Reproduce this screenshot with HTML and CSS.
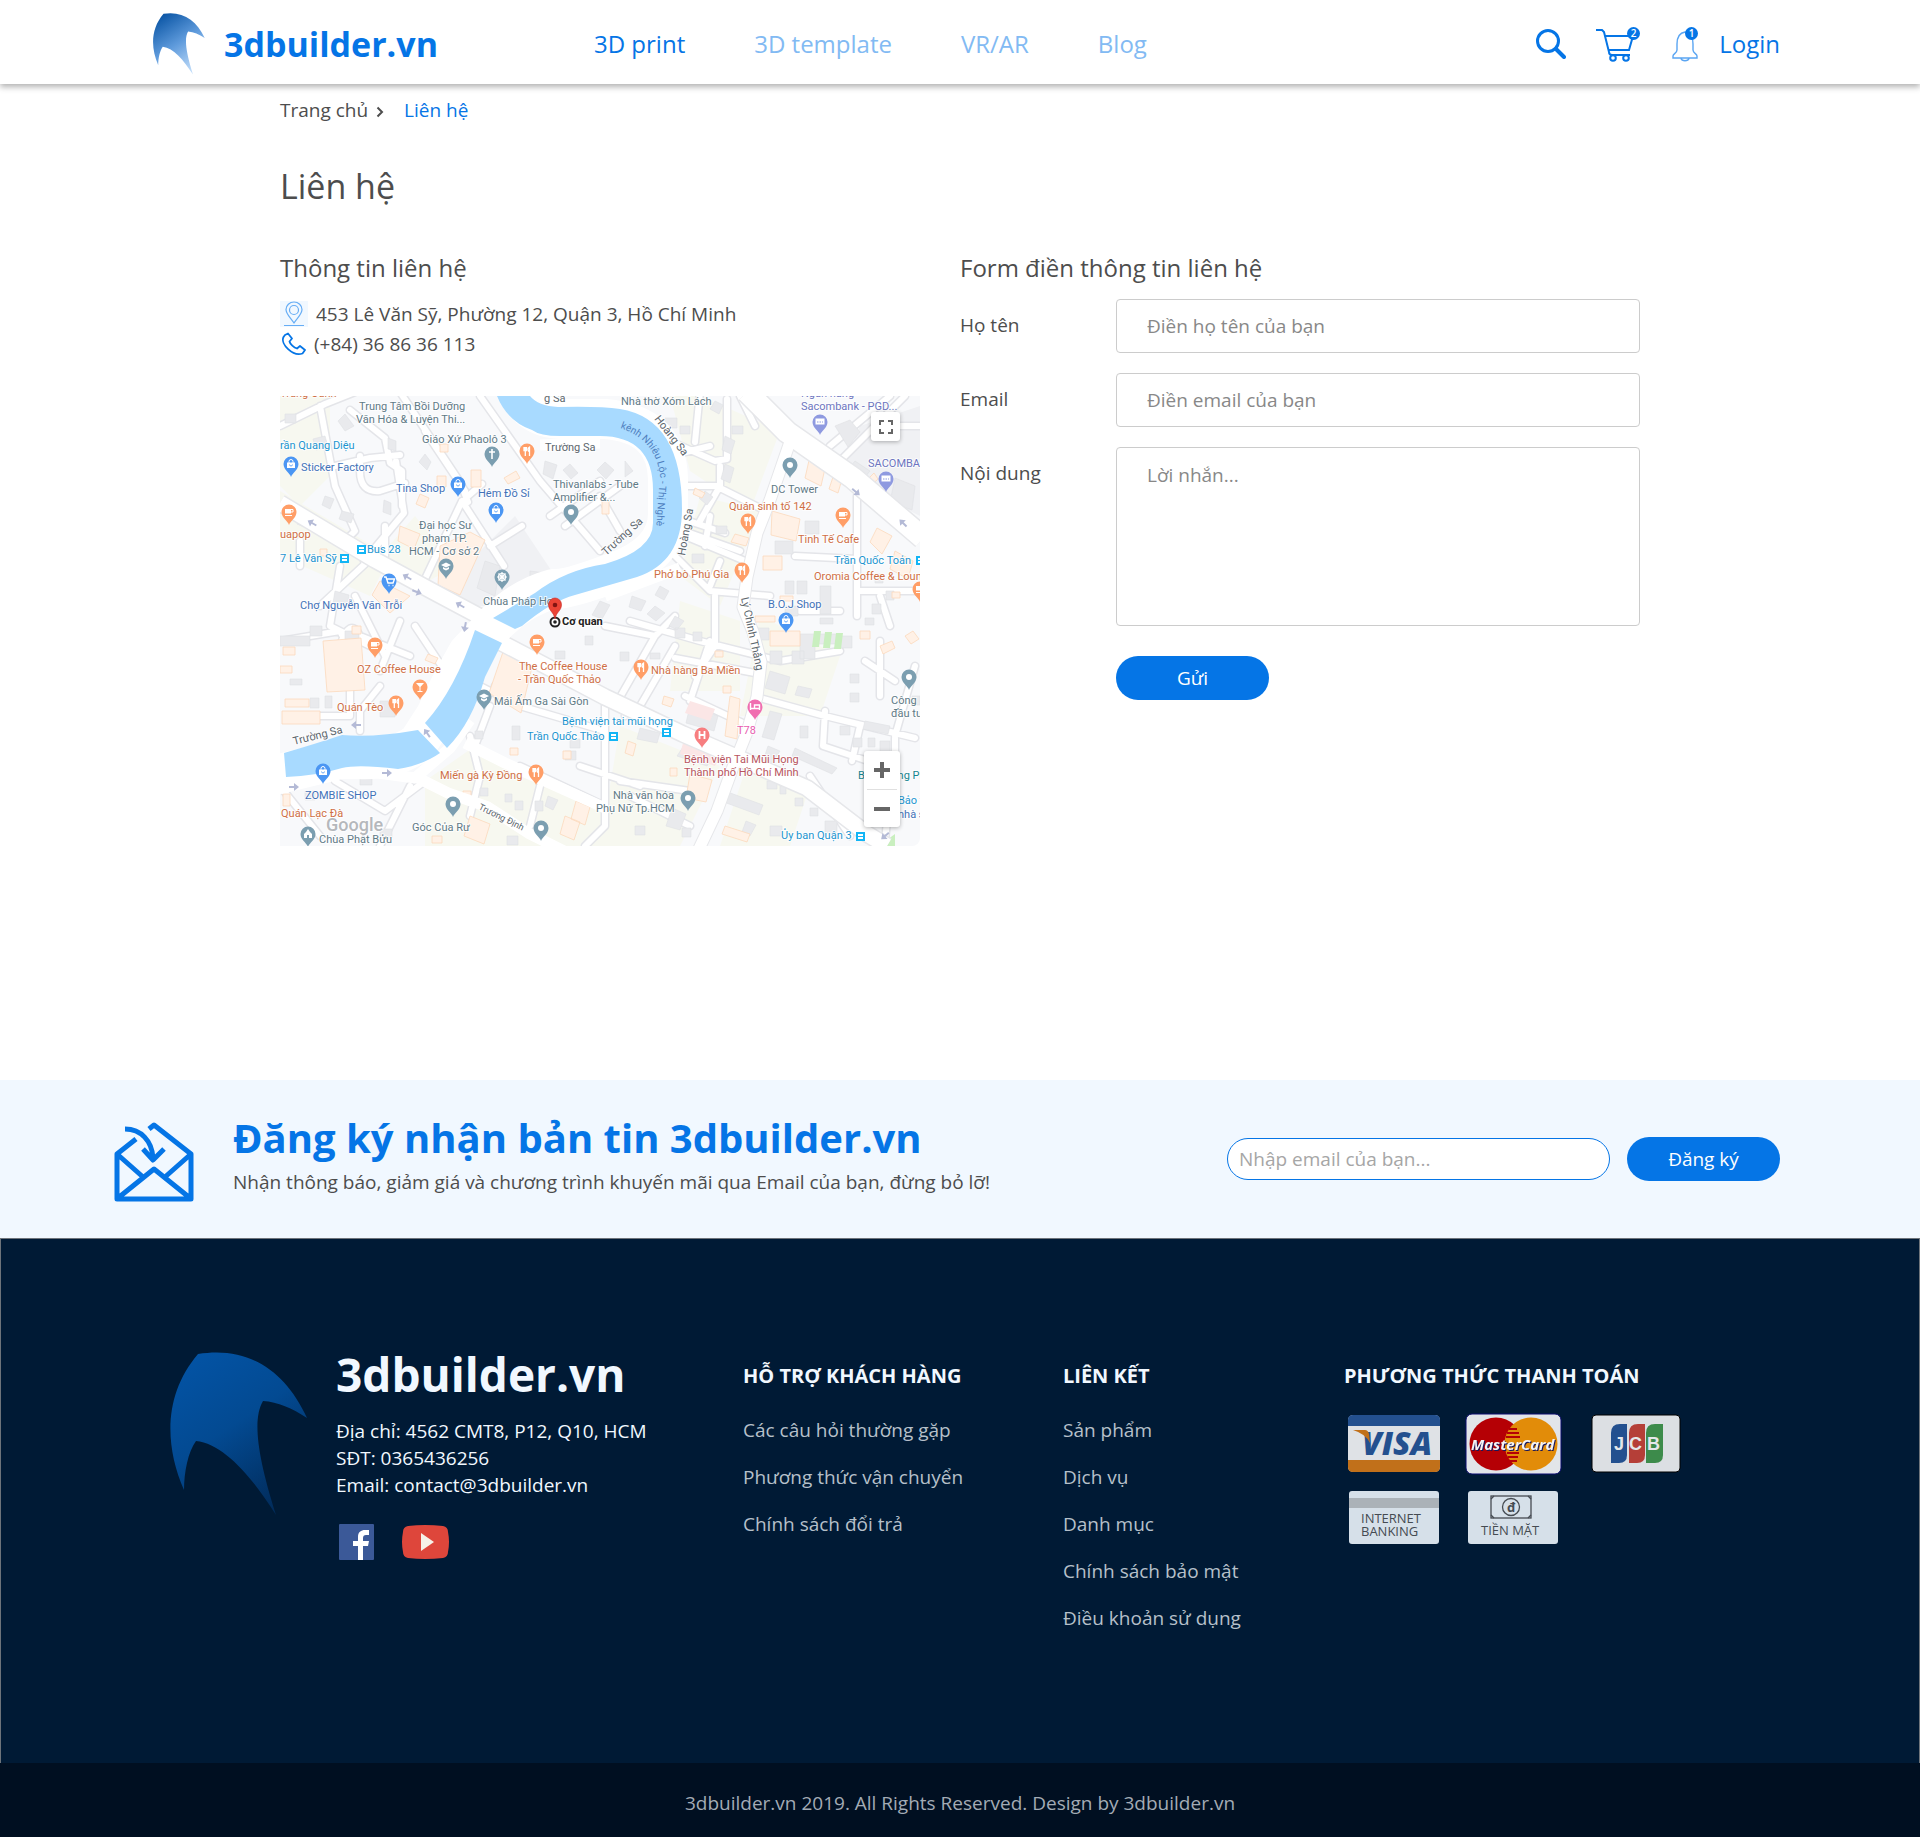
FILE: index.html
```html
<!DOCTYPE html>
<html lang="vi">
<head>
<meta charset="utf-8">
<meta name="viewport" content="width=device-width, initial-scale=1">
<title>Liên hệ - 3dbuilder.vn</title>
<link rel="stylesheet" href="styles.css">
</head>
<body>
<header class="site-header">
  <a class="brand" href="#">
    <svg class="brand-mark" viewBox="0 0 138 164" aria-hidden="true">
      <defs>
        <linearGradient id="markLight" x1="0.2" y1="0" x2="0.75" y2="1">
          <stop offset="0" stop-color="#0a55a5"/><stop offset="0.5" stop-color="#5f9bdc"/><stop offset="1" stop-color="#c9e2fc"/>
        </linearGradient>
        <linearGradient id="markDark" x1="0.2" y1="0" x2="0.75" y2="1">
          <stop offset="0" stop-color="#0353a4"/><stop offset="0.45" stop-color="#034a92"/><stop offset="1" stop-color="#012a58"/>
        </linearGradient>
      </defs>
      <path fill="url(#markLight)" d="M28 2C78-6 115 18 137 66C122 56 108 50 93 49C83 66 86 100 106 163C82 125 54 92 26 89C18 100 14 120 14 138C-6 92-6 42 28 2Z"/>
    </svg>
    <span class="brand-name">3dbuilder.vn</span>
  </a>
  <nav class="main-nav" aria-label="Menu">
    <a class="active" href="#">3D print</a>
    <a href="#">3D template</a>
    <a href="#">VR/AR</a>
    <a href="#">Blog</a>
  </nav>
  <div class="tools">
    <button class="tool" type="button" aria-label="Search">
      <svg class="icon-search" viewBox="0 0 30 30" fill="none" stroke="#0575e6"><circle cx="12" cy="12" r="10.5" stroke-width="3"/><path d="M20 20l8 8" stroke-width="4" stroke-linecap="round"/></svg>
    </button>
    <button class="tool" type="button" aria-label="Cart">
      <svg class="icon-cart" viewBox="0 0 44 35" fill="none" stroke="#0575e6" stroke-width="2"><path d="M0 3h6l2 2 5 20q0 3 3 3h18M9 9h28l-4 14H13"/><circle cx="17" cy="31" r="2.800"/><circle cx="30" cy="31" r="2.800"/></svg>
      <span class="badge">2</span>
    </button>
    <button class="tool" type="button" aria-label="Notifications">
      <svg class="icon-bell" viewBox="0 0 26 35" fill="none" stroke="#5aa5f2" stroke-width="1.400"><path d="M13 5C7 6 5 11 5 17v6c0 3-4 4-4 6v2h24v-2c0-2-4-3-4-6v-6C21 11 19 6 13 5zM9 31.500c1 3 7 3 8 0"/></svg>
      <span class="badge">1</span>
    </button>
    <a class="login" href="#">Login</a>
  </div>
</header>

<main class="page">
  <nav class="breadcrumb" aria-label="Breadcrumb">
    <a href="#">Trang chủ</a>
    <svg viewBox="0 0 8 12" aria-hidden="true"><path d="M1.500 1.500L6 6l-4.500 4.500" fill="none" stroke="#4d4d4d" stroke-width="2"/></svg>
    <a class="current" href="#">Liên hệ</a>
  </nav>
  <h1>Liên hệ</h1>
  <div class="columns">
    <section>
      <h2>Thông tin liên hệ</h2>
      <ul class="contact-list">
        <li>
          <svg class="icon-place" viewBox="0 0 28 26" fill="none" stroke="#66adf5" stroke-width="1.200"><path fill="#f1f8ff" stroke="none" d="M0 0h28v26H0z"/><path d="M14 22C10 16 6 13 6 8.500a8 7.500 0 0 1 16 0C22 13 18 16 14 22zM4 24.500h20"/><circle cx="14" cy="9" r="4.500"/></svg>
          <span>453 Lê Văn Sỹ, Phường 12, Quận 3, Hồ Chí Minh</span>
        </li>
        <li>
          <svg class="icon-phone" viewBox="0 0 28 24" fill="none" stroke="#0575e6" stroke-width="1.800" stroke-linejoin="round"><path d="M5 3L8 1.500 12 6.500 9.500 9.500C10 12 14 15.500 17 16.500L20 14 25 18 22.500 21.500C13 25 0 12 3.500 5z"/></svg>
          <span>(+84) 36 86 36 113</span>
        </li>
      </ul>
      <div class="map">
        <svg class="map-canvas" viewBox="0 0 640 450" role="img" aria-label="453 Lê Văn Sỹ, Phường 12, Quận 3">
          <defs>
            <path id="pin" d="M0 0C-1-4-7.500-7-7.500-13a7.500 7.500 0 0 1 15 0C7.500-7 1-4 0 0z"/>
            <g id="dot"><use href="#pin"/><circle cy="-13" r="3" fill="#fff"/></g>
            <g id="bag"><use href="#pin"/><path d="M-4-14.500h8v5.500h-8z" fill="#fff"/><path d="M-2-14v-1.500a2 2 0 0 1 4 0V-14" fill="none" stroke="#fff"/><path d="M-1.500-12.500a1.500 1.500 0 0 0 3 0" fill="none" stroke="#4b96f3" stroke-width=".8"/></g>
            <g id="cup"><use href="#pin"/><path d="M-4-16h6v4.500h-6zM-4-10h7v1h-7z" fill="#fff"/><path d="M2-15.500h2v2.500h-2" fill="none" stroke="#fff"/></g>
            <g id="fork"><use href="#pin"/><path d="M-3-17v3.500h2.500V-17M-1.700-17v9M2.500-8v-9c-2 1-2 4 0 5" fill="none" stroke="#fff" stroke-width="1.300"/></g>
            <g id="grad"><use href="#pin"/><path d="M-5-14l5-2.500 5 2.500-5 2.500zM-3-12l3 1.500 3-1.500v2l-3 1.500-3-1.500z" fill="#fff"/></g>
            <g id="bank"><use href="#pin"/><path d="M-4.500-16.500h9v6h-9z" fill="#fff"/><path d="M-3-13h6" stroke="#8f9ae0" stroke-dasharray="1.500 1"/></g>
            <g id="bus"><path d="M0 0h9v9H0z" fill="#12b5f5"/><path d="M2 2h5v5H2z" fill="#fff"/><path d="M2 4.500h5" stroke="#12b5f5"/></g>
            <path id="arrow" d="M-5-1h5v-3l5 4-5 4v-3h-5z" fill="#b4bad6"/>
          </defs>
          <path fill="#f8f9fb" d="M0 0h640v450H0z"/>
          <path fill="#f7f8f0" d="M0 95l110 65-20 40-90-40zM0 0h50v80L20 110 0 90zM410 75l60 40 30-80-80-35h-30zM420 100l60 15-40 95-40-30zM135 120l40 50-35 20-40-30zM145 385l50-35 130 60v40H145zM480 220l80 40-20 60-80 0zM340 330l100 40-40 80h-80zM470 360l60 30-20 60h-70zM400 205l60 20v70h-70z"/>
          <path fill="#f0f1f4" d="M175 180l60-60 40 60-30 30-80 0zM560 80l80 40V10l-60 20z"/>
          <g fill="none" stroke="#e4e5e9" stroke-width="9" stroke-linejoin="round" stroke-linecap="round">
            <path id="lanes" d="M0 30L45 8 75-4M40 10l15 80 20 45-12 12M70 14l35 28 5 25 12 8v35M80 60v15q0 22 20 20l25-8M55 70l35-8 30-3M120-4l60 90 8 20M145 35l40 60M200 0l60 85 60 70M182 105l-38 80M182 105l42 65M188 100l14-12M210 150l32-20M116 65l8 52-40 48M20 145v25M85 168L40 210M75 200l30 60M105 130v30M390 45l45 20 12-2 0-60M395 90h45l-20 35M440 70v22l40 20M400 122l45 15M390 130l70 25M405 140l60 25M430 120l-5 30M390 155l40 40 60 5M440 165l-10 25M435 200v50l-20 30M350 225l70 20 80 20 60-10M325 230l50 10 20-20M375 240l-40 70M395 250l-35 60-15 10M430 245l-20 60M395 262l80 15M405 300l60 28M480 302l65 18 90 22M545 315l-2 35 45 15q20 5 22 30l-5 50M580 330l-8 35M615 342v40M600 245v55M635 270l-20 70M585 265l30 20M515 160l62 3M577 100v60l0 60M520 215l40 0M577 195h63M600 200l10 30M610 0l-60 50M625 0l-70 70M640 30l-25 0M475 30l-15-30M60 170l-10 60 40 20M135 230l40 60M60 250q10-30 20-10l50 20M100 290l-20 25v20M120 225l-20 50M0 245l60-10 10 20v65H20M0 390l40 50M55 385l50 30 40-30M130 390l-30 60M190 340l10 40-10 40M240 370l85 40M200 290l40 20 85 25M210 310l-15 40M325 300l0 130-20 20M300 370l60 20M340 385l70 10M350 400l60 30M250 430l10-40M570 440l-40-60M215 290l30-30 30 10M420-4l-5 50M390 60l40-10M285 130l55-40M270 120l50-35M320 100l20 35"/>
          </g>
          <use href="#lanes" class="lane-fill"/>
          <g fill="#e9eaed" stroke="#dfe0e4" stroke-width=".6">
            <path d="M5 18h11v9H5zM33 43l12-3 3 11-12 3zM65 18l9 12-9 5-7-10zM20 120l10 3-3 9-10-4zM45 100l9 3-4 10-8-4zM62 115l12 3-3 9-12-4zM104 104l7 3v12l-8-3zM145 58l6 8-4 8-8-8zM108 42l8 3v10l-8-2zM225 195l14 6-4 12-14-6zM205 165l15 5-5 30-18-8zM195 210l10 4-4 9-10-5zM55 195l14 4-2 12-14-4zM30 230h12v10H30zM0 240h30v10H0zM65 235h14v10H65zM250 175l15 2v10h-15zM265 65l12 4-4 14-10-5zM290 68l8 9-7 6-8-9zM325 66l9 8-8 9-9-9zM345 65l8 10-8 6zM385 22h12v10h-12zM400 30h10v8h-10zM445 40l10 5-4 13-9-4zM445 68l9 4-4 15-9-4zM452 30h11v8h-11zM435 5l8 4-4 9-9-5zM425 95l8 6-6 8-8-7zM555 30l15-6 10 12-12 15zM575 65l15 10-10 12-15-10zM615 82l20 8-3 24-22-8zM525 125h14v13h-14zM495 145h18v13h-18zM505 185h9v13h-9zM517 185h10v13h-10zM540 190h11v28h-11zM505 210h13v10h-13zM540 222h13v6h-13zM595 178h8v9h-8zM606 195h8v9h-8zM592 208h9v10h-9zM585 222h9v7h-9zM412 158h12v9h-12zM436 130h11v8h-11zM352 200l14 5-5 10-12-4zM375 210l10 7-9 8-9-7zM395 220l9 5-7 9-8-4zM320 205l10 4-8 14-10-4zM380 190l9 5-5 9-9-5zM395 232h10v10h-10zM413 236h9v9h-9zM340 256h9v9h-9zM370 257h10v6h-10zM475 232h14v12h-14zM490 255h12v13h-12zM512 255h12v13h-12zM520 238h40v10h-25v15h-15zM490 275l20 6-5 17-20-6zM518 290l14 3-3 9-14-3zM560 240h12v12h-12zM570 278h9v9h-9zM570 297h9v9h-9zM585 325l25 5-2 8-25-5zM520 330h8v12h-8zM410 310l28 10-4 15-28-8zM360 332l20 5-3 10-20-4zM405 348l30 10-8 12-30-10zM490 315l12 3-8 26-12-3zM488 350l12 5-8 12-8-5zM515 352l42 20-5 6-40-18zM560 330h10v9h-10zM573 342h9v9h-9zM588 342h7v9h-7zM445 395l38 14-4 10-38-14zM487 385h10v8h-10zM500 390h6v8h-6zM515 402h8v8h-8zM530 412h8v8h-8zM490 430h12v10h-12zM466 425l10 4-6 11-8-4zM392 412l14 6-6 16-14-4zM402 432h9v9h-9zM355 430h10v9h-10zM545 425h12v12h-12zM10 283h12v6H10zM30 302h9v10h-9zM45 300h7v12h-7zM72 258h10v10H72zM73 280h7v9h-7zM100 305h15v16h-15zM195 335h8v8h-8zM232 330h8v14h-8zM290 343h10v9h-10zM285 355h11v9h-11zM235 405h8v9h-8zM225 398h7v8h-7zM255 405h8v10h-8zM268 400l10 4-5 10-8-4zM80 382h12v7H80zM100 433h12v9h-12zM25 395h10v9H25zM227 440h11v9h-11zM305 240h8v9h-8zM275 255h10v8h-10zM200 392h8v8h-8zM600 345h10v12h-10zM632 300h8v9h-8z"/>
          </g>
          <g fill="#fff1e6" stroke="#fbd9bd" stroke-width=".8">
            <path d="M43 245l38-3 4 52-38 2zM3 251h12v8H3zM0 270h12v7H0zM5 303h24v8H5zM2 315h38v13H2zM160 150l30-14 15 8-25 55-22-10zM100 185l30 15-20 17-18-18zM120 130l20 8-6 15-16-8zM191 74h10v17h-10zM224 82l12-7 4 7-12 6zM140 98l9 4-4 10-9-4zM157 80h9v11h-9zM160 48h8v8h-8zM225 250l28 17-12 50-32-20zM530 60l16 8-5 22-16-8zM492 115l28 8-4 22-25-6zM483 160h19v14h-19zM490 235h30v15h-30zM415 92l10 5-3 5-9-4zM455 138l14 4-3 8-15-4zM554 78l8 5-4 14-9-4zM597 132l15 8-10 18-12-12zM585 86l9-9 4 6-10 9zM615 155l18 10-5 18-18-10zM580 235h10v8h-10zM625 240l8-5 6 8-8 5zM600 250l12-5 3 7-12 6zM450 300l10 3-3 40-12-3zM348 345l8 3-3 12-8-3zM410 378l22 6-6 22-20-4zM390 372h7v8h-7zM443 290h8v7h-8zM384 300l10 3-3 8-9-3zM435 255h8v6h-8zM190 420l20 8-6 20-20-8zM152 440h10v7h-10zM230 352h8v7h-8zM283 355h8v8h-8zM296 405l14 6-5 18-14-6zM285 420l15 6-6 18-14-6zM445 430l25 8-3 8-25-8zM40 153h7v7h-7zM72 230h9v8h-9zM3 398h7v12H3zM183 395h8v5h-8zM500 200h13v5h-13zM475 220h20v6h-20zM612 196h8v6h-8zM322 105h7v13h-7zM148 258l10 4-3 6-10-4z" />
          </g>
          <path fill="#c9efbf" d="M534 235h7l-2 16h-7zM545 236h7l-2 16h-7zM556 237h7l-2 16h-7zM604 446l11-8v12h-9z"/>
          <path fill="#fbe6e6" d="M405 340l40 10-10 20-35-12zM410 305l25 8-5 12-25-8z"/>
          <g fill="none" stroke="#e6e7ea" stroke-linejoin="round">
            <path stroke-width="18" d="M0 107L95 164l57 31 60 32M222 247l103 54 78 37 60 26 64 28 60 46 20 12"/>
            <path stroke-width="24" d="M467-4l40 40 66 46 70 60"/>
            <path stroke-width="13" d="M512 40l-22 64-13 33-10 44-4 30 10 25 8 30-4 35-10 35-14 35-16 44-20 42"/>
          </g>
          <g fill="none" stroke="#fff" stroke-linejoin="round">
            <path stroke-width="40" d="M235-8q15 30 45 31h45q62 5 63 60v35q0 38-50 57t-65 18q-30 8-55 32l-30 32q-20 35-32 62l-18 28q-25 18-60 16H60l-65 16"/>
            <path stroke-width="15" d="M0 107L95 164l57 31 60 32M222 247l103 54 78 37 60 26 64 28 60 46 20 12"/>
            <path stroke-width="21" d="M467-4l40 40 66 46 70 60"/>
            <path stroke-width="11" d="M512 40l-22 64-13 33-10 44-4 30 10 25 8 30-4 35-10 35-14 35-16 44-20 42M-5 388l80-14 60 8 35-30 20-28M325 200l75-28M320 47l-60 2M138 382l30 15 40 14 40 26 40 20M185 347l40 20 100 45"/>
          </g>
          <g fill="#a8daff">
            <path d="M217 0q10 25 35 34 8 6 28 6h40q53 0 53 54v33q0 27-48 41-40 6-70 29l-42 25 22 11 7-3q30-25 53-31l62-18q45-15 45-68 0-90-62-100-20-3-62-2-20-1-28-11z"/>
            <path d="M195 234q-20 60-50 93l22 25q25-25 38-71l17-34zM138 334q-45 8-76 5-24 8-58 18l2 24q30-1 56-9 16-4 56 1 25-4 42-16z"/>
          </g>
          <g>
            <use href="#arrow" transform="translate(32 127) rotate(210)"/><use href="#arrow" transform="translate(127 181) rotate(210)"/>
            <use href="#arrow" transform="translate(137 196) rotate(20)"/><use href="#arrow" transform="translate(180 209) rotate(210)"/>
            <use href="#arrow" transform="translate(185 231) rotate(100)"/><use href="#arrow" transform="translate(76 329) rotate(180)"/>
            <use href="#arrow" transform="translate(147 337) rotate(235)"/><use href="#arrow" transform="translate(107 377)"/>
            <use href="#arrow" transform="translate(14 391)"/><use href="#arrow" transform="translate(576 96) rotate(40)"/><use href="#arrow" transform="translate(623 127) rotate(225)"/>
            <use href="#arrow" transform="translate(605 440) rotate(140)"/>
          </g>
          <g class="labels">
            <g class="grey">
              <text x="79" y="14">Trung Tâm Bồi Dưỡng</text><text x="76" y="27">Văn Hóa &amp; Luyện Thi...</text>
              <text x="142" y="47">Giáo Xứ Phaolô 3</text><text x="273" y="92">Thivanlabs - Tube</text><text x="273" y="105">Amplifier &amp;...</text>
              <text x="139" y="133">Đại học Sư</text><text x="142" y="146">phạm TP.</text><text x="129" y="159">HCM - Cơ sở 2</text>
              <text x="203" y="209">Chùa Pháp Hoa</text><text x="341" y="9">Nhà thờ Xóm Lách</text><text x="491" y="97">DC Tower</text>
              <text x="214" y="309">Mái Ấm Ga Sài Gòn</text><text x="132" y="435">Góc Của Rư</text><text x="39" y="447">Chùa Phật Bửu</text>
              <text x="333" y="403">Nhà văn hóa</text><text x="316" y="416">Phụ Nữ Tp.HCM</text><text x="611" y="308">Công</text><text x="611" y="321">đầu tư</text>
            </g>
            <g class="street">
              <text x="265" y="55">Trường Sa</text><text x="264" y="6">g Sa</text>
              <text transform="translate(374 23) rotate(52)">Hoàng Sa</text><text transform="translate(405 160) rotate(-80)">Hoàng Sa</text>
              <text transform="translate(326 160) rotate(-42)">Trường Sa</text><text transform="translate(14 349) rotate(-14)">Trường Sa</text>
              <text transform="translate(461 202) rotate(78)">Lý Chính Thắng</text><text class="small" transform="translate(198 413) rotate(26)">Trương Định</text>
            </g>
            <path id="canal" d="M340 32Q376 44 380 80L376 134" fill="none"/>
            <text class="water"><textPath href="#canal">kênh Nhiêu Lộc - Thị Nghè</textPath></text>
            <g class="blue">
              <text x="21" y="75">Sticker Factory</text><text x="116" y="96">Tina Shop</text><text x="198" y="101">Hẻm Đồ Sỉ</text>
              <text x="20" y="213">Chợ Nguyễn Văn Trỗi</text><text x="488" y="212">B.O.J Shop</text><text x="25" y="403">ZOMBIE SHOP</text><text x="618" y="422">nhà sách</text>
            </g>
            <g class="transit">
              <text x="0" y="53">rần Quang Diệu</text><text x="87" y="157">Bus 28</text><text x="0" y="166">7 Lê Văn Sỹ</text>
              <text x="554" y="168">Trần Quốc Toản</text><text x="282" y="329">Bệnh viện tai mũi họng</text><text x="247" y="344">Trần Quốc Thảo</text>
              <text x="501" y="443">Ủy ban Quận 3</text><text x="618" y="408">Bảo tàng</text><text class="teal" x="578" y="383">Bệnh cộng Phú</text>
            </g>
            <g class="food">
              <text x="0" y="1">Trung Oanh</text><text x="0" y="142">uapop</text><text x="449" y="114">Quán sinh tố 142</text><text x="518" y="147">Tinh Tế Cafe</text>
              <text x="374" y="182">Phở bò Phú Gia</text><text x="534" y="184">Oromia Coffee &amp; Lounge</text><text x="77" y="277">OZ Coffee House</text>
              <text x="57" y="315">Quán Tèo</text><text x="239" y="274">The Coffee House</text><text x="238" y="287">- Trần Quốc Thảo</text>
              <text x="371" y="278">Nhà hàng Ba Miền</text><text x="160" y="383">Miến gà Kỳ Đồng</text><text x="1" y="421">Quán Lạc Đà</text>
            </g>
            <g class="violet"><text x="521" y="1">Ngân hàng</text><text x="521" y="14">Sacombank - PGD...</text><text x="588" y="71">SACOMBANK</text></g>
            <text class="pink" x="457" y="338">T78</text>
            <g class="medical"><text x="404" y="367">Bệnh viện Tai Mũi Họng</text><text x="404" y="380">Thành phố Hồ Chí Minh</text></g>
            <text class="google" x="46" y="435">Google</text>
          </g>
          <use href="#bus" x="77" y="149"/><use href="#bus" x="60" y="158"/><use href="#bus" x="636" y="160"/><use href="#bus" x="329" y="336"/><use href="#bus" x="382" y="332"/><use href="#bus" x="576" y="436"/>
          <g fill="#4b96f3"><use href="#bag" x="11" y="81"/><use href="#bag" x="178" y="101"/><use href="#bag" x="216" y="127"/><use href="#bag" x="506" y="237"/><use href="#bag" x="43" y="388"/><use href="#pin" x="109" y="198"/></g>
          <path d="M104 181h2l2 6h5l1.500-4h-8M108.500 189.500h1M112.500 189.500h1" fill="none" stroke="#fff" stroke-width="1.400"/>
          <g fill="#ff9e67"><use href="#cup" x="9" y="129"/><use href="#fork" x="247" y="68"/><use href="#fork" x="468" y="138"/><use href="#cup" x="563" y="132"/><use href="#fork" x="462" y="187"/><use href="#cup" x="640" y="206"/><use href="#cup" x="95" y="262"/><use href="#pin" x="140" y="304"/><use href="#fork" x="116" y="320"/><use href="#cup" x="257" y="259"/><use href="#fork" x="256" y="389"/><use href="#fork" x="361" y="284"/></g>
          <path d="M136 287h8l-4 4.500zM139.500 290h1v5h2v1h-5v-1h2z" fill="#fff"/>
          <g fill="#7b9eb0"><use href="#pin" x="212" y="71"/><use href="#dot" x="291" y="129"/><use href="#grad" x="166" y="183"/><use href="#pin" x="222" y="194"/><use href="#dot" x="510" y="82"/><use href="#grad" x="204" y="314"/><use href="#dot" x="173" y="421"/><use href="#dot" x="261" y="445"/><use href="#pin" x="28" y="451"/><use href="#dot" x="408" y="415"/><use href="#dot" x="629" y="294"/></g>
          <path d="M212 53v10M209 56h6" stroke="#fff" stroke-width="1.600"/>
          <g fill="none" stroke="#fff" stroke-width="1.200"><circle cx="222" cy="181" r="3.500"/><path d="M217 181h10M222 176v10M218.500 177.500l7 7M225.500 177.500l-7 7"/></g>
          <path d="M24 442v-4l2-2 2-3 2 3 2 2v4h-3v-3h-2v3z" fill="#fff"/>
          <g fill="#8f9ae0"><use href="#bank" x="540" y="39"/><use href="#bank" x="606" y="96"/></g>
          <use href="#pin" x="475" y="324" fill="#f06eb0"/><path d="M470.500 307v7M470.500 312.500h9V309h-5v3.500M479.500 314v-2" fill="none" stroke="#fff" stroke-width="1.400"/>
          <use href="#pin" x="422" y="352" fill="#f77e80"/><path d="M419.500 335v8M424.500 335v8M419.500 339h5" stroke="#fff" stroke-width="1.800"/>
          <circle cx="275" cy="226" r="4.500" fill="#fff" stroke="#222" stroke-width="2"/><circle cx="275" cy="226" r="1.800" fill="#222"/>
          <path d="M275 223c-1-7-6.500-8-6.500-14.500a6.500 6.500 0 0 1 13 0c0 6.500-5.500 7.500-6.500 14.500z" fill="#ea4335" stroke="#c5221f" stroke-width=".6"/><circle cx="275" cy="209" r="2.300" fill="#811411"/>
          <text class="here" x="282" y="229">Cơ quan</text>
        </svg>
        <button class="map-control fullscreen" type="button" aria-label="Fullscreen"><svg viewBox="0 0 14 14"><path d="M1 5V1h4M9 1h4v4M13 9v4H9M5 13H1V9" fill="none" stroke="#666" stroke-width="2"/></svg></button>
        <div class="map-control zoom">
          <button type="button" aria-label="Zoom in"><svg viewBox="0 0 18 18"><path d="M9 1v16M1 9h16" stroke="#666" stroke-width="4"/></svg></button>
          <button type="button" aria-label="Zoom out"><svg viewBox="0 0 18 18"><path d="M1 9h16" stroke="#666" stroke-width="4"/></svg></button>
        </div>
      </div>
    </section>
    <section>
      <h2>Form điền thông tin liên hệ</h2>
      <form class="contact-form">
        <label for="name">Họ tên</label>
        <input id="name" type="text" placeholder="Điền họ tên của bạn">
        <label for="email">Email</label>
        <input id="email" type="email" placeholder="Điền email của bạn">
        <label for="message">Nội dung</label>
        <textarea id="message" placeholder="Lời nhắn..."></textarea>
        <button class="pill" type="submit">Gửi</button>
      </form>
    </section>
  </div>
</main>

<section class="newsletter">
  <svg class="icon-mail" viewBox="0 0 80 80" fill="none" stroke="#0575e6" stroke-width="5" stroke-linejoin="round"><path d="M22 17L3 32v45h74V32L40 3l-5 4M3 32l26 23M77 32L51 55M4 76l36-29 36 29"/><path d="M11 7c16 0 27 12 28 29M29 27l10 11 11-11"/></svg>
  <div class="newsletter-text">
    <h2>Đăng ký nhận bản tin 3dbuilder.vn</h2>
    <p>Nhận thông báo, giảm giá và chương trình khuyến mãi qua Email của bạn, đừng bỏ lỡ!</p>
  </div>
  <form class="subscribe">
    <input type="email" aria-label="Email" placeholder="Nhập email của bạn...">
    <button class="pill" type="submit">Đăng ký</button>
  </form>
</section>

<footer class="site-footer">
  <div class="footer-main">
    <svg class="footer-mark" viewBox="0 0 138 164" aria-hidden="true"><path fill="url(#markDark)" d="M28 2C78-6 115 18 137 66C122 56 108 50 93 49C83 66 86 100 106 163C82 125 54 92 26 89C18 100 14 120 14 138C-6 92-6 42 28 2Z"/></svg>
    <div class="company">
      <p class="company-name">3dbuilder.vn</p>
      <address>Địa chỉ: 4562 CMT8, P12, Q10, HCM<br>SĐT: 0365436256<br>Email: contact@3dbuilder.vn</address>
      <div class="social">
        <a href="#" aria-label="Facebook"><svg class="icon-fb" viewBox="0 0 35 36"><rect width="35" height="36" rx="1" fill="#3b5998"/><path fill="#fff" d="M19 36V22h-5v-5h5v-4c0-5 3-7 7-7h4v5h-3c-2 0-3 1-3 3v3h6l-1 5h-5v14z"/></svg></a>
        <a href="#" aria-label="YouTube"><svg class="icon-yt" viewBox="0 0 47 34"><path fill="#de463b" d="M6 1q17-2 35 0 5 1 5 6 2 10 0 20 0 5-5 6-18 2-35 0-5-1-5-6-2-10 0-20 0-5 5-6z"/><path fill="#f6f1e8" d="M19 8l13 9-13 9z"/></svg></a>
      </div>
    </div>
    <section class="footer-col">
      <h3>HỖ TRỢ KHÁCH HÀNG</h3>
      <ul>
        <li><a href="#">Các câu hỏi thường gặp</a></li>
        <li><a href="#">Phương thức vận chuyển</a></li>
        <li><a href="#">Chính sách đổi trả</a></li>
      </ul>
    </section>
    <section class="footer-col">
      <h3>LIÊN KẾT</h3>
      <ul>
        <li><a href="#">Sản phẩm</a></li>
        <li><a href="#">Dịch vụ</a></li>
        <li><a href="#">Danh mục</a></li>
        <li><a href="#">Chính sách bảo mật</a></li>
        <li><a href="#">Điều khoản sử dụng</a></li>
      </ul>
    </section>
    <section class="footer-col">
      <h3>PHƯƠNG THỨC THANH TOÁN</h3>
      <div class="payments">
        <svg class="card" viewBox="0 0 98 62" role="img" aria-label="Visa">
          <rect x="3" y="2" width="92" height="57" rx="5" fill="#dfe2e6"/><path fill="#23508f" d="M3 13V7q0-5 5-5h82q5 0 5 5v6z"/><path fill="#c1701a" d="M3 47h92v7q0 5-5 5H8q-5 0-5-5z"/>
          <text class="visa" x="17" y="42">VISA</text><path fill="#c1701a" d="M8 17h12q3 0 4 4l1 9q-4-9-17-13z"/>
        </svg>
        <svg class="card" viewBox="0 0 98 62" role="img" aria-label="MasterCard">
          <rect x="2" y="1" width="95" height="60" rx="6" fill="#e2e5e9" stroke="#0b0b6e"/><circle cx="32" cy="31" r="26.500" fill="#b50005"/><circle cx="67" cy="31" r="26.500" fill="#e28c09"/>
          <path d="M45 16h8M43 20h12M42 24h14M43 40h12M44 44h10M46 48h7" stroke="#b50005" stroke-width="2"/><text class="mc" x="7" y="37">MasterCard</text>
        </svg>
        <svg class="card" viewBox="0 0 98 62" role="img" aria-label="JCB">
          <rect x="9" y="2" width="88" height="57" rx="4" fill="#dcdfe3" stroke="#000"/>
          <path fill="#23508f" d="M28 20q0-9 9-9h7v31q0 8-8 8h-8z"/><path fill="#b53f38" d="M46 20q0-9 9-9h7v31q0 8-8 8h-8z"/><path fill="#3d8b4b" d="M63 20q0-9 9-9h8v31q0 8-8 8h-9z"/>
          <text class="jcb" x="31 46 64" y="37">JCB</text>
        </svg>
        <svg class="card" viewBox="0 0 98 62" role="img" aria-label="Internet banking">
          <rect x="4" y="6" width="90" height="53" rx="3" fill="#d6e0e9"/><path fill="#abb2b8" d="M4 13h90v10H4z"/><text class="bank" x="16" y="38">INTERNET</text><text class="bank" x="16" y="51">BANKING</text>
        </svg>
        <svg class="card" viewBox="0 0 98 62" role="img" aria-label="Tiền mặt">
          <rect x="4" y="6" width="90" height="53" rx="3" fill="#d6e0e9"/><g fill="none" stroke="#454b52" stroke-width="1.300"><rect x="27" y="11" width="40" height="22"/><circle cx="47" cy="22" r="8.500"/><path d="M27 14l3-3M64 11l3 3M27 30l3 3M64 33l3-3"/></g>
          <text class="dong" x="43" y="27">đ</text><text class="bank" x="17" y="50">TIỀN MẶT</text>
        </svg>
      </div>
    </section>
  </div>
  <p class="copyright">3dbuilder.vn 2019. All Rights Reserved. Design by 3dbuilder.vn</p>
</footer>
</body>
</html>
```
FILE: styles.css
```css
* { box-sizing: border-box; }

body {
  margin: 0;
  font: 19px/28px "Open Sans", "Noto Sans", sans-serif;
  color: #4d4d4d;
  background: #fff;
}

a { color: inherit; text-decoration: none; }
button, input, textarea { font: inherit; }
button { padding: 0; border: 0; background: none; cursor: pointer; }
h1, h2, h3, p, ul { margin: 0; padding: 0; }
h1, h2 { font-weight: 400; }
ul { list-style: none; }
svg { display: block; flex: none; }

/* Header */
.site-header {
  position: relative;
  display: flex;
  align-items: center;
  min-height: 84px;
  padding: 0 140px 0 152px;
  color: #0575e6;
  font-size: 24px;
  line-height: 36px;
  box-shadow: 0 3px 6px rgba(0, 0, 0, .3);
}
.brand { display: flex; align-items: center; gap: 18px; width: 442px; }
.brand-mark { width: 54px; height: 62px; margin-top: 4px; }
.brand-name { font-size: 34px; font-weight: 700; line-height: 48px; padding-top: 4px; }
.main-nav { display: flex; gap: 69px; padding-top: 4px; }
.main-nav a { color: #82baf3; }
.main-nav .active { color: #0575e6; }
.tools { display: flex; align-items: center; margin-left: auto; padding-top: 4px; }
.tool { position: relative; }
.icon-search { width: 30px; height: 30px; margin-right: 30px; }
.icon-cart { width: 44px; height: 35px; margin-right: 32px; }
.icon-bell { width: 26px; height: 35px; margin-right: 21px; }
.badge {
  position: absolute;
  top: 0;
  right: 32px;
  width: 13px;
  height: 13px;
  border-radius: 50%;
  background: #0575e6;
  color: #fff;
  font-size: 10px;
  font-weight: 600;
  line-height: 13px;
  text-align: center;
}
.icon-bell + .badge { right: 21px; }

/* Contact page */
.page { max-width: 1360px; margin: 0 auto; padding: 12px 0 234px; }
.breadcrumb { display: flex; align-items: center; }
.breadcrumb svg { width: 8px; height: 12px; margin: 4px 20px 0 8px; }
.breadcrumb .current { color: #0575e6; }
h1 { margin-top: 38px; font-size: 34px; line-height: 48px; }
.columns { display: grid; grid-template-columns: 640fr 680fr; gap: 40px; margin-top: 42px; }
.columns h2 { margin-bottom: 15px; font-size: 24px; line-height: 32px; }
.contact-list li { display: flex; align-items: center; gap: 8px; min-height: 30px; }
.contact-list li:last-child { gap: 6px; }
.icon-place { width: 28px; height: 26px; }
.icon-phone { width: 28px; height: 24px; }

.contact-form { display: grid; grid-template-columns: 156px 1fr; row-gap: 20px; }
.contact-form label { padding-top: 12px; }
.contact-form input, .contact-form textarea {
  width: 100%;
  height: 54px;
  padding: 0 30px;
  border: 1px solid #ccc;
  border-radius: 4px;
  background: #fff;
  color: #4d4d4d;
}
.contact-form textarea { display: block; height: 179px; padding: 13px 30px; resize: none; }
.contact-form .pill { grid-column: 2; margin-top: 10px; }
::placeholder { color: #888; opacity: 1; }
.pill { width: 153px; height: 44px; border-radius: 22px; background: #0575e6; color: #fff; }

/* Map */
.map { position: relative; margin-top: 37px; }
.map-canvas { width: 100%; height: auto; border-radius: 0 0 8px 0; }
.map-control { position: absolute; right: 20px; border-radius: 3px; background: #fff; box-shadow: 0 1px 4px rgba(0, 0, 0, .3); }
.map-control svg { margin: auto; }
.fullscreen { top: 16px; width: 29px; height: 29px; }
.fullscreen svg { width: 14px; height: 14px; }
.zoom { bottom: 19px; width: 36px; }
.zoom button { display: block; width: 30px; height: 38px; margin: 0 auto; }
.zoom button + button { border-top: 1px solid #e0e0e0; }
.zoom svg { width: 18px; height: 18px; }
.lane-fill { fill: none; stroke: #fff; stroke-width: 6px; stroke-linejoin: round; stroke-linecap: round; }
.labels, .here { font-family: Roboto, "Noto Sans", sans-serif; font-size: 11px; }
.labels text { paint-order: stroke; stroke: rgba(255, 255, 255, .8); stroke-width: 2px; stroke-linejoin: round; }
.grey { fill: #5f7a86; }
.street { fill: #5c666d; }
.street .small { font-size: 9px; }
.labels .water { fill: #4f7fc0; font-size: 10px; stroke: none; }
.blue { fill: #4272b8; }
.transit { fill: #1c95d0; }
.transit .teal { fill: #15858f; }
.food { fill: #cf6f45; }
.violet { fill: #6d75c0; }
.pink { fill: #e85db0; }
.medical { fill: #b85560; }
.labels .google { fill: #b5b8bc; font-size: 18px; font-weight: 500; }
.labels .here, .here { fill: #222; font-weight: 700; paint-order: stroke; stroke: #fff; stroke-width: 2px; }

/* Newsletter */
.newsletter {
  display: flex;
  align-items: center;
  min-height: 158px;
  padding: 0 140px 0 114px;
  background: #f1f8ff;
}
.icon-mail { width: 80px; height: 80px; margin: 6px 39px 0 0; }
.newsletter-text { padding-bottom: 14px; }
.newsletter h2 { color: #0575e6; font-size: 40px; font-weight: 700; line-height: 60px; }
.subscribe { display: flex; align-items: center; gap: 17px; margin-left: auto; }
.subscribe input {
  width: 383px;
  height: 42px;
  padding: 0 11px;
  border: 1px solid #0575e6;
  border-radius: 21px;
  background: #fff;
}
.subscribe ::placeholder { color: #a6a6a6; }

/* Footer */
.site-footer { background: #001a35; color: #f1f8ff; }
.footer-main {
  display: grid;
  grid-template-columns: 166fr 407fr 320fr 281fr 436fr;
  align-items: start;
  min-height: 525px;
  padding: 105px 139px 105px 169px;
  border: 1px solid #6d737a;
  border-bottom: 0;
}
.footer-mark { width: 138px; height: 164px; margin-top: 8px; }
.company-name { font-size: 46px; font-weight: 700; line-height: 60px; }
.company address { margin-top: 14px; font-style: normal; line-height: 27px; }
.social { display: flex; align-items: center; gap: 28px; margin: 25px 0 0 3px; }
.icon-fb { width: 35px; height: 36px; }
.icon-yt { width: 47px; height: 34px; }
.footer-col { padding-top: 18px; }
.footer-col h3 { font-size: 20px; font-weight: 700; line-height: 28px; white-space: nowrap; }
.footer-col ul { display: grid; gap: 20px; margin-top: 27px; line-height: 27px; color: #b6c0ca; }
.payments { display: grid; grid-template-columns: repeat(3, 98px); gap: 10px 21px; margin: 23px 0 0 1px; }
.card { width: 98px; height: 62px; }
.visa { font: italic 800 32px "Open Sans", sans-serif; fill: #23508f; }
.mc { font: italic 700 15px "Open Sans", sans-serif; fill: #f4f4f6; filter: drop-shadow(1px 1px 0 #17175c); }
.jcb { font: 700 18px "Liberation Sans", sans-serif; fill: #e4e7ea; }
.bank { font: 13px "Open Sans", sans-serif; fill: #454b52; }
.dong { font: 700 13px "Open Sans", sans-serif; fill: #454b52; }
.copyright { padding: 26px 0 20px; background: #000f21; color: #a3abb5; text-align: center; }
```
